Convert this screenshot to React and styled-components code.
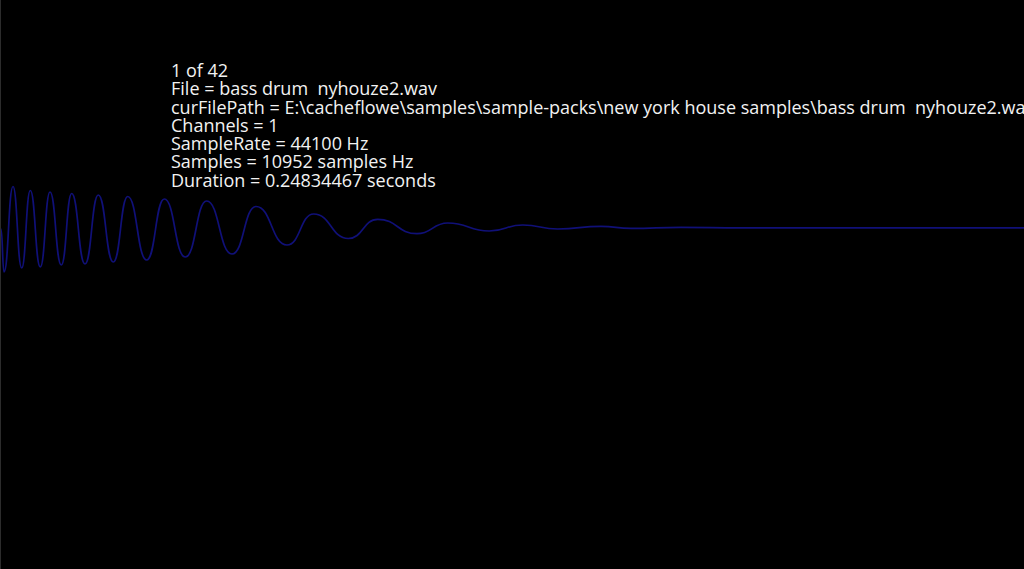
import React from "react";
import styled, { createGlobalStyle } from "styled-components";

const Global = createGlobalStyle`
  html, body { margin: 0; padding: 0; background: #000; overflow: hidden; }
  #root { width: 1024px; height: 569px; }
`;

const Stage = styled.div`
  position: relative;
  width: 1024px;
  height: 569px;
  background: #000;
  border-left: 1px solid #2c2c2c;
  box-sizing: border-box;
  overflow: hidden;
`;

const Canvas = styled.svg`
  position: absolute;
  left: 0;
  top: 0;
  width: 1024px;
  height: 569px;
`;

const Info = styled.div`
  position: relative;
  padding: 61px 0 0 170px;
  display: flex;
  flex-direction: column;
`;

const Line = styled.div`
  font-family: "Open Sans", "Noto Sans", sans-serif;
  font-size: 18px;
  line-height: 18.3px;
  color: #f2f2f2;
  white-space: pre;
`;

const extrema = [
  [0, 229], [3, 272], [12, 186.5], [20.7, 268], [29.3, 190.5], [39.3, 267],
  [49, 192], [60.3, 265], [70.7, 193.5], [84, 264], [97.3, 195], [112.3, 262],
  [126.7, 196.5], [145.7, 260], [163.3, 199], [184.3, 257], [205.7, 201],
  [231, 254], [255, 206.5], [286, 245], [312.7, 214], [347.3, 238.5],
  [376.7, 219.3], [416, 233.7], [446.7, 223], [488.3, 231], [521.7, 225],
  [556.7, 229], [600, 226.3], [630, 228.3], [680, 227.3], [740, 227.8],
  [1024, 227.8],
];

function buildPath(pts) {
  let d = `M ${pts[0][0]} ${pts[0][1]}`;
  for (let i = 1; i < pts.length; i++) {
    const [x0, y0] = pts[i - 1];
    const [x1, y1] = pts[i];
    const h = (x1 - x0) / 2;
    d += ` C ${x0 + h} ${y0} ${x1 - h} ${y1} ${x1} ${y1}`;
  }
  return d;
}

const lines = [
  "1 of 42",
  "File = bass drum  nyhouze2.wav",
  "curFilePath = E:\\cacheflowe\\samples\\sample-packs\\new york house samples\\bass drum  nyhouze2.wav",
  "Channels = 1",
  "SampleRate = 44100 Hz",
  "Samples = 10952 samples Hz",
  "Duration = 0.24834467 seconds",
];

export default function App() {
  return (
    <>
      <Global />
      <Stage>
        <Canvas viewBox="0 0 1024 569">
          <path
            d={buildPath(extrema)}
            fill="none"
            stroke="#101078"
            strokeWidth="1.7"
            strokeLinejoin="round"
          />
        </Canvas>
        <Info>
          {lines.map((t, i) => (
            <Line key={i}>{t}</Line>
          ))}
        </Info>
      </Stage>
    </>
  );
}
